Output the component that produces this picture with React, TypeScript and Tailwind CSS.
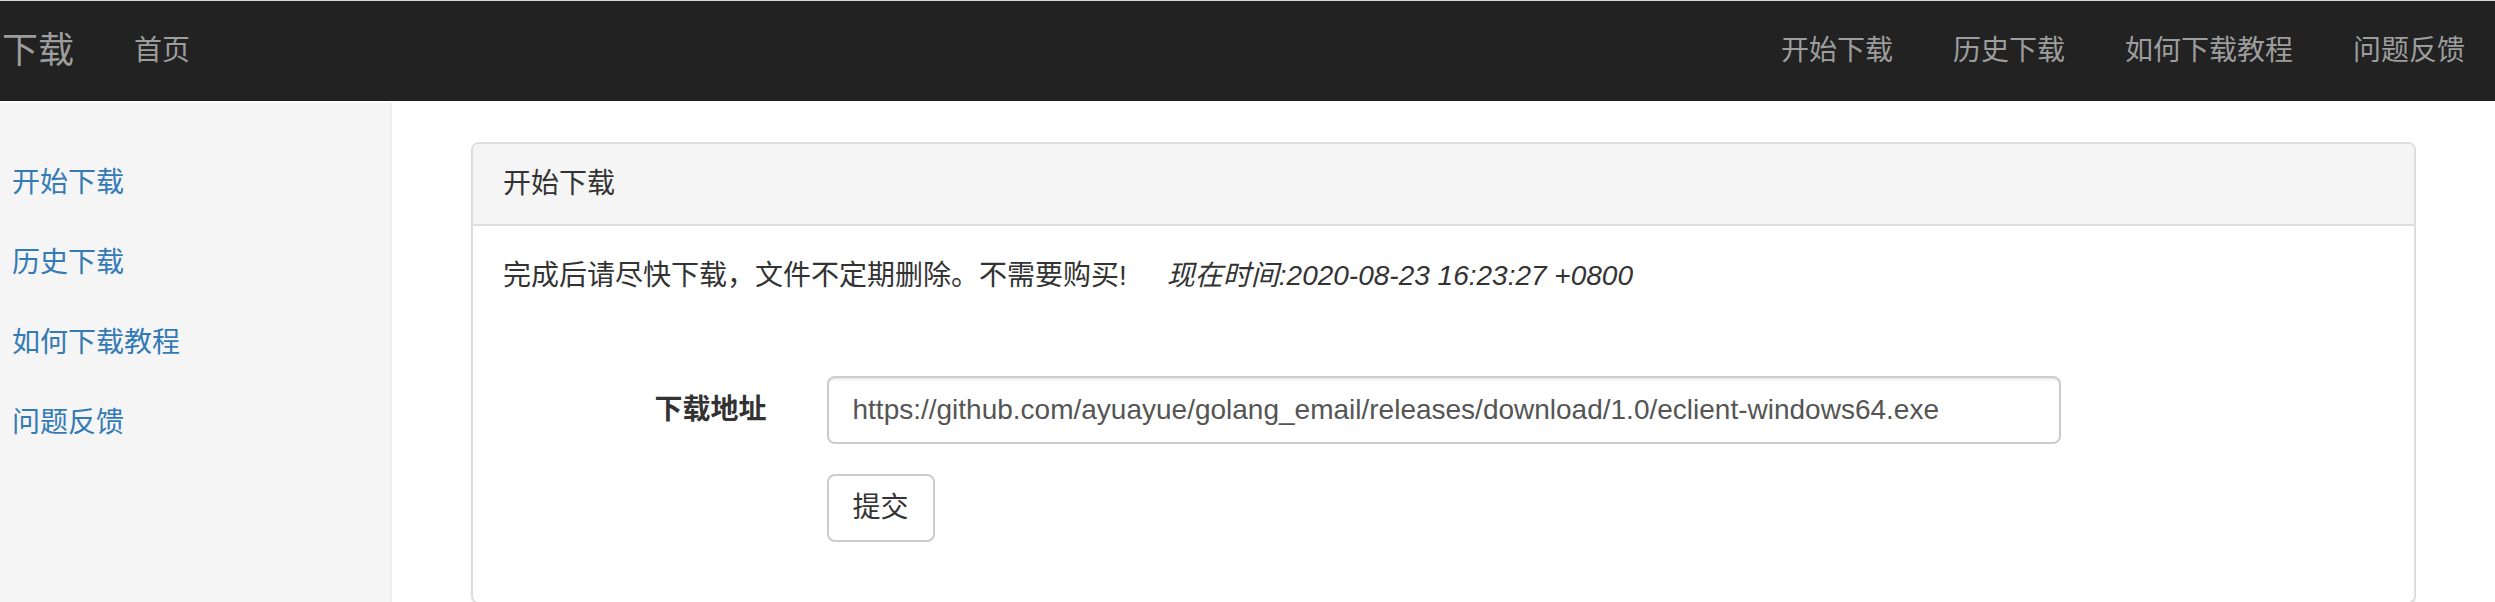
import React from 'react';

const topLinks = ['开始下载', '历史下载', '如何下载教程', '问题反馈'];

const Navbar: React.FC = () => (
  <nav className="flex h-[100px] items-center bg-[#222222] text-[#9d9d9d]">
    <a className="pl-[2px] pr-[30px] text-[36px] leading-[100px]">下载</a>
    <a className="px-[30px] text-[28px] leading-[100px]">首页</a>
    <ul className="ml-auto flex">
      {topLinks.map((t) => (
        <li key={t}>
          <a className="block px-[30px] text-[28px] leading-[100px]">{t}</a>
        </li>
      ))}
    </ul>
  </nav>
);

const Sidebar: React.FC = () => (
  <aside className="w-[392px] shrink-0 border-r-2 border-[#eeeeee] bg-[#f5f5f5] pt-[40px]">
    <ul>
      {topLinks.map((t) => (
        <li key={t}>
          <a className="block py-[20px] pl-[12px] text-[28px] leading-[40px] text-[#337ab7]">{t}</a>
        </li>
      ))}
    </ul>
  </aside>
);

export default function App() {
  return (
    <div className="flex min-h-screen flex-col border-t border-[#d8d8d8] bg-white font-['Liberation_Sans','Noto_Sans_CJK_SC',sans-serif] text-[#333333]">
      <Navbar />
      <div className="mt-[2px] flex flex-1">
        <Sidebar />
        <main className="flex-1 px-[79px] pt-[39px]">
          <div className="rounded-[8px] border-2 border-[#dddddd] bg-white shadow-[0_2px_2px_rgba(0,0,0,0.05)]">
            <div className="rounded-t-[6px] border-b-2 border-[#dddddd] bg-[#f5f5f5] px-[30px] py-[20px] text-[28px] leading-[40px]">
              开始下载
            </div>
            <div className="p-[30px] text-[28px] leading-[40px]">
              <p className="mb-[20px]">
                完成后请尽快下载，文件不定期删除。不需要购买!
                <i className="ml-[40px]">现在时间:2020-08-23 16:23:27 +0800</i>
              </p>
              {/* margins collapse with the paragraph, so the full gap goes here */}
              <form className="-mx-[30px] mt-[80px]">
                <div className="mb-[30px] grid grid-cols-12">
                  <label className="col-span-2 px-[30px] pt-[14px] text-right font-bold">下载地址</label>
                  <div className="col-span-8 px-[30px]">
                    <input
                      type="text"
                      readOnly
                      value="https://github.com/ayuayue/golang_email/releases/download/1.0/eclient-windows64.exe"
                      className="block h-[68px] w-full rounded-[8px] border-2 border-[#cccccc] px-[24px] text-[28px] text-[#555555] shadow-[inset_0_2px_2px_rgba(0,0,0,0.075)] outline-none"
                    />
                  </div>
                </div>
                <div className="mb-[30px] grid grid-cols-12">
                  <div className="col-span-10 col-start-3 px-[30px]">
                    <button
                      type="button"
                      className="h-[68px] rounded-[8px] border-2 border-[#cccccc] bg-white px-[24px] text-[28px] text-[#333333]"
                    >
                      提交
                    </button>
                  </div>
                </div>
              </form>
            </div>
          </div>
        </main>
      </div>
    </div>
  );
}
